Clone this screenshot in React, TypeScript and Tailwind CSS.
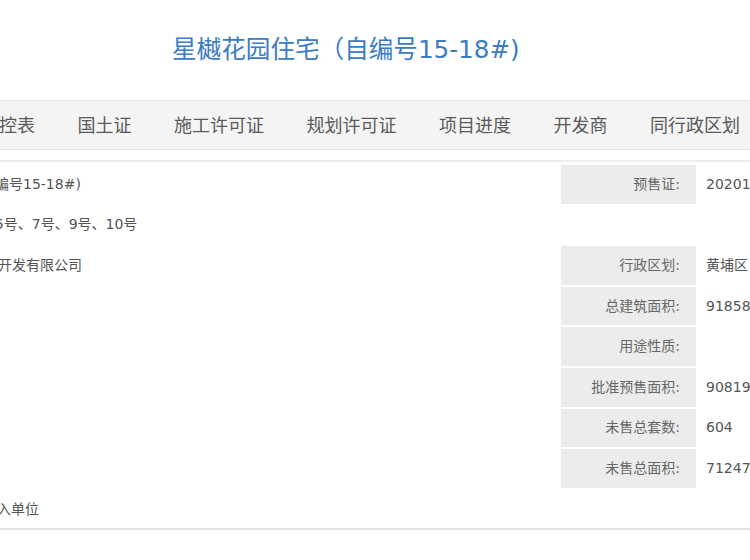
import React from "react";

const rows: { left?: string; leftOffset?: string; label?: string; value?: string }[] = [
  { left: "星樾花园住宅（自编号15-18#)", leftOffset: "-ml-[117px]", label: "预售证:", value: "20201905号" },
  { left: "1号、2号、5号、7号、9号、10号", leftOffset: "-ml-[79px]" },
  { left: "广州市星樾房地产开发有限公司", leftOffset: "-ml-[114px]", label: "行政区划:", value: "黄埔区" },
  { label: "总建筑面积:", value: "91858.52" },
  { label: "用途性质:", value: "" },
  { label: "批准预售面积:", value: "90819.46" },
  { label: "未售总套数:", value: "604" },
  { label: "未售总面积:", value: "71247.83" },
  { left: "录入单位", leftOffset: "-ml-[17px]" },
];

const navItems = ["销控表", "国土证", "施工许可证", "规划许可证", "项目进度", "开发商", "同行政区划"];

export default function App() {
  return (
    <div
      className="w-[750px] h-[560px] overflow-hidden bg-white"
      style={{ fontFamily: '"DejaVu Sans", "Noto Sans CJK SC", sans-serif' }}
    >
      <div className="h-[100px] flex items-center pl-[172px] text-[24.6px] text-[#3a7cc5] whitespace-nowrap">
        星樾花园住宅（自编号15-18#)
      </div>
      <div className="h-[50px] border-y border-[#e5e5e5] bg-[#f4f4f4] overflow-hidden">
        <div className="h-full flex items-center gap-[42.5px] -ml-[19px] text-[18px] text-[#5a5a5a] whitespace-nowrap">
          {navItems.map((n) => (
            <span key={n}>{n}</span>
          ))}
        </div>
      </div>
      <div className="mt-[10px] border-t-2 border-[#eeeeee] pt-[3px] border-b-2 border-b-[#e2e2e2]">
        <div className="flex flex-col gap-[2px] text-[14px]">
          {rows.map((r, i) => (
            <div key={i} className="h-[38.6px] grid grid-cols-[561px_135px_1fr] items-stretch">
              <div className="overflow-hidden whitespace-nowrap flex items-center text-[#555]">
                {r.left ? <span className={r.leftOffset}>{r.left}</span> : null}
              </div>
              <div
                className={
                  r.label
                    ? "bg-[#ececec] flex items-center justify-end pr-[16px] text-[#666] whitespace-nowrap"
                    : ""
                }
              >
                {r.label}
              </div>
              <div className="flex items-center pl-[10px] text-[#555] whitespace-nowrap overflow-hidden">
                {r.value}
              </div>
            </div>
          ))}
        </div>
      </div>
    </div>
  );
}
